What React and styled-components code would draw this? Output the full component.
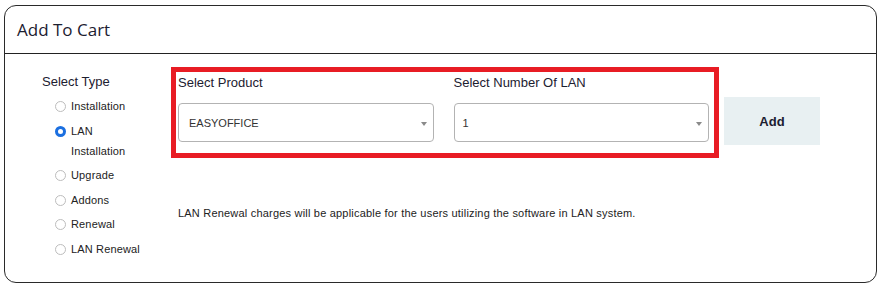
import React, { useState } from "react";
import styled, { createGlobalStyle } from "styled-components";

const Global = createGlobalStyle`
  html, body { margin: 0; padding: 0; background: #fff; }
  body { font-family: "Liberation Sans", Arial, sans-serif; color: #222; }
  * { box-sizing: border-box; }
`;

const Page = styled.div`
  padding: 5px 5px 6px 4px;
`;

const Card = styled.div`
  border: 1px solid #2a2a2a;
  border-radius: 12px;
  background: #fff;
`;

const Header = styled.div`
  height: 48px;
  display: flex;
  align-items: center;
  padding: 0 12px 1px;
  border-bottom: 1px solid #222;
`;

const Title = styled.h2`
  margin: 0;
  font-family: "Open Sans", "Noto Sans", sans-serif;
  font-weight: 400;
  font-size: 17px;
  color: #1c2030;
`;

const Body = styled.div`
  display: flex;
  padding: 13px 0 23px 37px;
`;

const TypeColumn = styled.div`
  width: 129px;
  flex: none;
  padding-top: 7px;
`;

const TypeHeading = styled.div`
  font-size: 13px;
  line-height: 16px;
  color: #1c2030;
  margin-bottom: 6px;
`;

const TypeList = styled.div`
  display: flex;
  flex-direction: column;
  gap: 4.5px;
  padding-left: 13px;
`;

const TypeRow = styled.label`
  display: flex;
  align-items: flex-start;
  gap: 5px;
  cursor: pointer;
`;

const Radio = styled.span`
  flex: none;
  width: 11px;
  height: 11px;
  margin-top: 5px;
  border-radius: 50%;
  background: #fff;
  border: ${(p) => (p.$checked ? "3px solid #1b6fe0" : "1px solid #bdbdbd")};
`;

const TypeLabel = styled.span`
  font-size: 11px;
  line-height: 20px;
  max-width: 72px;
  color: #222;
  letter-spacing: 0.15px;
`;

const Main = styled.div`
  flex: 1;
`;

const TopRow = styled.div`
  display: flex;
  align-items: flex-start;
  gap: 5px;
`;

const Highlight = styled.div`
  width: 548px;
  border: 5px solid #e81c24;
  padding: 2px 5px 11px 2px;
  display: grid;
  grid-template-columns: 1fr 1fr;
  column-gap: 20px;
`;

const Field = styled.div`
  display: flex;
  flex-direction: column;
`;

const FieldLabel = styled.div`
  font-size: 13px;
  line-height: 16px;
  color: #1c2030;
  margin: 1px 0 12px;
`;

const SelectBox = styled.div`
  position: relative;
  height: 39px;
  border: 1px solid #b3b3b3;
  border-radius: 4px;
  display: flex;
  align-items: center;
  padding: 0 24px 0 ${(p) => p.$pad || 10}px;
  font-size: 11px;
  color: #333;
  background: #fff;
`;

const Caret = styled.span`
  position: absolute;
  right: 6px;
  top: 50%;
  margin-top: -1px;
  width: 0;
  height: 0;
  border-left: 3.5px solid transparent;
  border-right: 3.5px solid transparent;
  border-top: 4px solid #8a8a8a;
`;

const AddButton = styled.button`
  margin-top: 30px;
  width: 96px;
  height: 48px;
  border: none;
  background: #e8f0f2;
  font-family: "Liberation Sans", Arial, sans-serif;
  font-weight: 700;
  font-size: 13px;
  color: #1c2030;
  cursor: pointer;
`;

const Note = styled.p`
  margin: 48px 0 0 7px;
  font-size: 11px;
  line-height: 14px;
  letter-spacing: 0.2px;
  color: #222;
`;

const types = ["Installation", "LAN Installation", "Upgrade", "Addons", "Renewal", "LAN Renewal"];

export default function App() {
  const [selected, setSelected] = useState("LAN Installation");
  return (
    <Page>
      <Global />
      <Card>
        <Header>
          <Title>Add To Cart</Title>
        </Header>
        <Body>
          <TypeColumn>
            <TypeHeading>Select Type</TypeHeading>
            <TypeList>
              {types.map((t) => (
                <TypeRow key={t} onClick={() => setSelected(t)}>
                  <Radio $checked={selected === t} />
                  <TypeLabel>{t}</TypeLabel>
                </TypeRow>
              ))}
            </TypeList>
          </TypeColumn>
          <Main>
            <TopRow>
              <Highlight>
                <Field>
                  <FieldLabel>Select Product</FieldLabel>
                  <SelectBox>
                    EASYOFFICE
                    <Caret />
                  </SelectBox>
                </Field>
                <Field>
                  <FieldLabel>Select Number Of LAN</FieldLabel>
                  <SelectBox $pad={8}>
                    1
                    <Caret />
                  </SelectBox>
                </Field>
              </Highlight>
              <AddButton>Add</AddButton>
            </TopRow>
            <Note>
              LAN Renewal charges will be applicable for the users utilizing the software in LAN system.
            </Note>
          </Main>
        </Body>
      </Card>
    </Page>
  );
}
